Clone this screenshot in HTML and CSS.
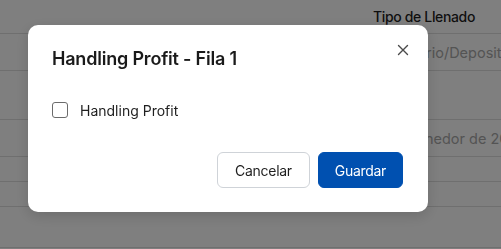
FILE: index.html
```html
<!DOCTYPE html>
<html lang="es">
<head>
    <meta charset="UTF-8">
    <title>Handling Profit</title>
    <link rel="stylesheet" href="styles.css">
</head>
<body>
    <div class="page">
        <div class="grid">
            <div class="grid-row grid-head">
                <div class="cell">Tipo de Llenado</div>
            </div>
            <div class="grid-row row-md">
                <div class="cell">Operario/Deposito</div>
            </div>
            <div class="grid-row row-lg">
                <div class="cell"></div>
            </div>
            <div class="grid-row row-md">
                <div class="cell">Contenedor de 20'</div>
            </div>
            <div class="grid-row row-sm">
                <div class="cell"></div>
            </div>
            <div class="grid-row row-sm">
                <div class="cell"></div>
            </div>
            <div class="grid-row row-xl">
                <div class="cell"></div>
            </div>
        </div>
    </div>

    <!-- Modal -->
    <div class="overlay">
        <div class="modal">
            <button class="modal-close" aria-label="Cerrar">
                <svg width="12" height="12" viewBox="0 0 12 12">
                    <path d="M1.5 1.5 L10.5 10.5 M10.5 1.5 L1.5 10.5" stroke="#4a4a4a" stroke-width="1.4" stroke-linecap="round"/>
                </svg>
            </button>
            <div class="modal-header">Handling Profit - Fila 1</div>
            <div class="modal-body">
                <label class="check">
                    <input type="checkbox">
                    <span class="box"></span>
                    <span>Handling Profit</span>
                </label>
            </div>
            <div class="modal-footer">
                <button class="btn btn-secondary">Cancelar</button>
                <button class="btn btn-primary">Guardar</button>
            </div>
        </div>
    </div>
</body>
</html>
```

FILE: styles.css
```css
* {
    box-sizing: border-box;
}
body {
    margin: 0;
    font-family: Inter, "Noto Sans", Arial, sans-serif;
    background-color: white;
    color: #1f1f1f;
}
.page {
    width: 100%;
    height: 249px;
    overflow: hidden;
}
.grid-row {
    display: flex;
    align-items: center;
    border-bottom: 1px solid #dedede;
}
.grid-head {
    height: 34px;
    font-size: 14px;
    font-weight: 500;
    letter-spacing: -0.35px;
    color: #1f1f1f;
}
.row-md {
    height: 37px;
    font-size: 14.5px;
    color: #a8a8a8;
}
.row-lg {
    height: 49px;
}
.row-sm {
    height: 25px;
}
.row-xl {
    height: 41px;
}
.cell {
    padding-left: 373px;
    white-space: nowrap;
}
.row-md .cell {
    padding-left: 384px;
}

.overlay {
    position: fixed;
    inset: 0;
    background-color: rgba(0, 0, 0, 0.5);
    display: flex;
    align-items: flex-start;
    padding: 25px 0 0 28px;
}
.modal {
    position: relative;
    width: 400px;
    height: 187px;
    background-color: white;
    border-radius: 10px;
    box-shadow: 0 4px 14px rgba(0, 0, 0, 0.15);
}
.modal-close {
    position: absolute;
    top: 13px;
    right: 13px;
    width: 24px;
    height: 24px;
    border: none;
    background: none;
    padding: 0;
    display: flex;
    align-items: center;
    justify-content: center;
    cursor: pointer;
}
.modal-header {
    padding: 20px 24px 0;
    font-size: 18px;
    line-height: 28px;
    font-weight: 600;
    letter-spacing: -0.2px;
    color: #1a1a1a;
}
.modal-body {
    padding: 25px 24px 30px;
}
.check {
    display: flex;
    align-items: center;
    height: 24px;
    gap: 12px;
    font-size: 14px;
    color: #1f1f1f;
}
.check input {
    display: none;
}
.check .box {
    width: 16px;
    height: 16px;
    border: 1.5px solid #6b6b6b;
    border-radius: 3px;
}
.modal-footer {
    display: flex;
    justify-content: flex-end;
    gap: 8px;
    padding: 0 25px 24px;
}
.btn {
    height: 36px;
    border-radius: 6px;
    font-family: inherit;
    font-size: 14px;
    letter-spacing: -0.3px;
    padding: 0 16px;
    cursor: pointer;
}
.btn-secondary {
    background-color: white;
    border: 1px solid #cfd3d8;
    color: #1f1f1f;
    padding: 0 17px;
}
.btn-primary {
    background-color: #0050b0;
    border: 1px solid #0050b0;
    color: white;
}
```
